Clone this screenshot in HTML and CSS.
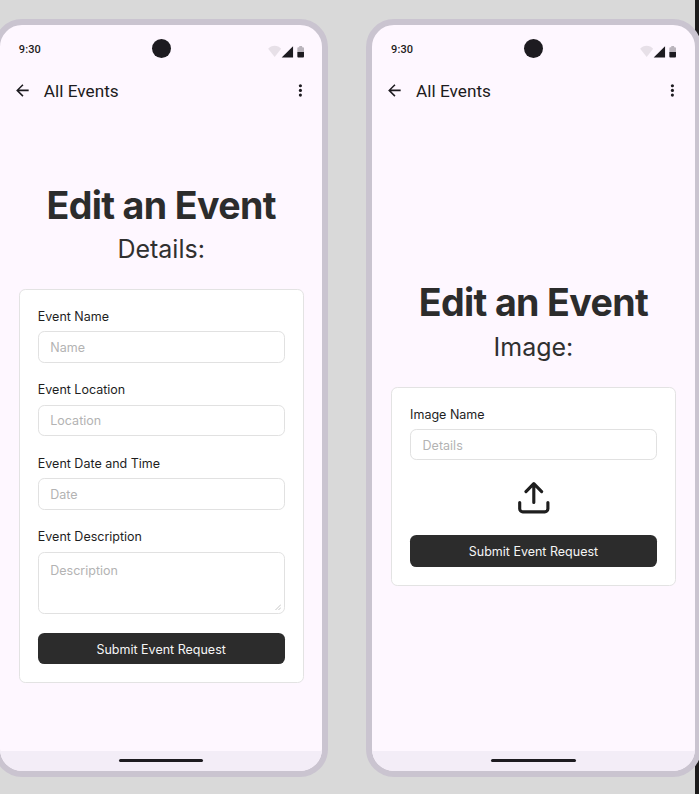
FILE: index.html
```html
<!DOCTYPE html>
<html lang="en">
<head>
<meta charset="utf-8">
<title>Edit an Event</title>
<link rel="stylesheet" href="styles.css">
</head>
<body>
<svg width="0" height="0" class="defs">
  <symbol id="back" viewBox="0 0 24 24"><path fill="currentColor" d="M7.825 13l5.6 5.6L12 20l-8-8 8-8 1.425 1.4-5.6 5.6H20v2z"/></symbol>
  <symbol id="more" viewBox="0 0 24 24"><g fill="currentColor"><circle cx="12" cy="6" r="2"/><circle cx="12" cy="12" r="2"/><circle cx="12" cy="18" r="2"/></g></symbol>
  <symbol id="status" viewBox="0 0 46 17">
    <path fill="#1d1b20" opacity=".1" d="M8.5 15.500 .2 4.800C2.300 2.500 5.200 1 8.500 1s6.200 1.500 8.300 3.800z"/>
    <path fill="#1d1b20" d="M17.500 16H32V1.500z"/>
    <path fill="#1d1b20" opacity=".3" d="M37.500 8.800V4q0-1.200 1.200-1.200H40V1.200h3.600v1.600h1.200q1.200 0 1.200 1.200v4.800z"/>
    <path fill="#1d1b20" d="M37.500 8.800H46v6q0 1.200-1.200 1.200h-6.100q-1.200 0-1.200-1.200z"/>
  </symbol>
  <symbol id="upload" viewBox="0 0 48 48"><path fill="none" stroke="currentColor" stroke-width="4" stroke-linecap="round" stroke-linejoin="round" d="M42 30v8a4 4 0 0 1-4 4H10a4 4 0 0 1-4-4v-8M34 16 24 6 14 16M24 6v24"/></symbol>
</svg>
<main class="canvas">
  <section class="phone">
    <div class="status-bar"><span class="time">9:30</span><span class="camera"></span><svg class="status-icons"><use href="#status"/></svg></div>
    <header class="app-bar"><svg class="icon"><use href="#back"/></svg><span class="app-title">All Events</span><svg class="icon"><use href="#more"/></svg></header>
    <div class="content">
      <h1>Edit an Event</h1>
      <p class="subtitle">Details:</p>
      <form class="card">
        <label class="field"><span class="label">Event Name</span><input placeholder="Name"></label>
        <label class="field"><span class="label">Event Location</span><input placeholder="Location"></label>
        <label class="field"><span class="label">Event Date and Time</span><input placeholder="Date"></label>
        <label class="field"><span class="label">Event Description</span>
          <span class="area"><textarea placeholder="Description"></textarea><svg class="grip" viewBox="0 0 7 7"><path d="M.5 6.500 6.500.5M3.700 6.500l2.800-2.800"/></svg></span></label>
        <button type="button">Submit Event Request</button>
      </form>
    </div>
    <div class="nav-bar"><span class="handle"></span></div>
  </section>
  <section class="phone">
    <div class="status-bar"><span class="time">9:30</span><span class="camera"></span><svg class="status-icons"><use href="#status"/></svg></div>
    <header class="app-bar"><svg class="icon"><use href="#back"/></svg><span class="app-title">All Events</span><svg class="icon"><use href="#more"/></svg></header>
    <div class="content">
      <h1>Edit an Event</h1>
      <p class="subtitle">Image:</p>
      <form class="card">
        <label class="field"><span class="label">Image Name</span><input placeholder="Details"></label>
        <svg class="upload"><use href="#upload"/></svg>
        <button type="button">Submit Event Request</button>
      </form>
    </div>
    <div class="nav-bar"><span class="handle"></span></div>
  </section>
</main>
</body>
</html>
```
FILE: styles.css
```css
* { box-sizing: border-box; }
html { overflow: hidden; background: #1c1b1b; }
body { margin: 0; font-family: Inter, sans-serif; color: #1e1e1e; }
.defs { display: block; height: 0; }
.canvas {
  width: 694.5px;
  height: 794px;
  padding-top: 18.5px;
  background: #d9d9d9;
  display: flex;
  align-items: flex-start;
  gap: 38px;
}
.phone {
  flex: 0 0 334.300px;
  height: 758.500px;
  border: 6px solid #cac4d0;
  border-radius: 28px;
  background: #fef7ff;
  overflow: hidden;
  display: flex;
  flex-direction: column;
}
.phone:first-child { margin-left: -6px; }
.status-bar {
  height: 40.700px;
  padding: 0 18.800px;
  display: grid;
  grid-template-columns: 1fr auto 1fr;
  align-items: end;
  padding-bottom: 7.500px;
}
.time { font: 500 11px/16px Roboto, sans-serif; letter-spacing: .1px; color: #1d1b20; margin-bottom: -.5px; }
.camera { width: 19px; height: 19px; border-radius: 50%; background: #1d1b20; }
.status-icons { width: 36px; height: 13.300px; justify-self: end; margin-bottom: -.3px; }
.app-bar { height: 50px; padding: .5px 12.500px 0; display: flex; align-items: center; gap: 12.500px; color: #1d1b20; }
.icon { width: 18.800px; height: 18.800px; }
.app-title { flex: 1; font: 400 17.200px/22px Roboto, sans-serif; letter-spacing: .02px; padding-top: 1px; }
.content { flex: 1; padding: 0 18.800px; display: flex; flex-direction: column; justify-content: center; }
h1 { margin: 0 0 6px; font-size: 37.600px; line-height: 45.200px; font-weight: 700; letter-spacing: -.65px; text-align: center; color: #2c2c2c; }
.subtitle { margin: 0 0 24px; font-size: 25px; line-height: 31px; text-align: center; color: #303030; }
.card {
  margin: 0;
  padding: 18px;
  border: 1px solid #e3e3e3;
  border-radius: 6.300px;
  background: #fff;
  display: flex;
  flex-direction: column;
  gap: 18.800px;
}
.field { display: flex; flex-direction: column; gap: 6.200px; font-size: 12.500px; }
.label { line-height: 18.200px; margin-bottom: -1px; }
input, textarea {
  width: 100%;
  border: 1px solid #e1e1e1;
  border-radius: 6.300px;
  background: #fff;
  padding: 1px 11.500px 0;
  font: 400 12.500px/17.200px Inter, sans-serif;
  outline: none;
}
input { height: 31.300px; }
textarea { display: block; height: 62.600px; padding: 9px 11.500px; resize: none; }
::placeholder { color: #b3b3b3; opacity: 1; }
.area { position: relative; }
.grip { position: absolute; right: 3.500px; bottom: 4px; width: 6.500px; height: 6.500px; fill: none; stroke: #b3b3b3; stroke-width: .8; }
button { height: 31.300px; padding: .8px 0 0; border: 0; border-radius: 6.300px; background: #2c2c2c; color: #f5f5f5; font: 400 12.500px/17.200px Inter, sans-serif; }
.upload { width: 37.600px; height: 37.600px; align-self: center; color: #1e1e1e; }
.nav-bar { height: 20px; padding-top: 1px; background: #f3edf7; display: flex; justify-content: center; }
.handle { width: 84.500px; height: 3.200px; margin-top: 6.500px; border-radius: 2px; background: #1d1b20; }
```
